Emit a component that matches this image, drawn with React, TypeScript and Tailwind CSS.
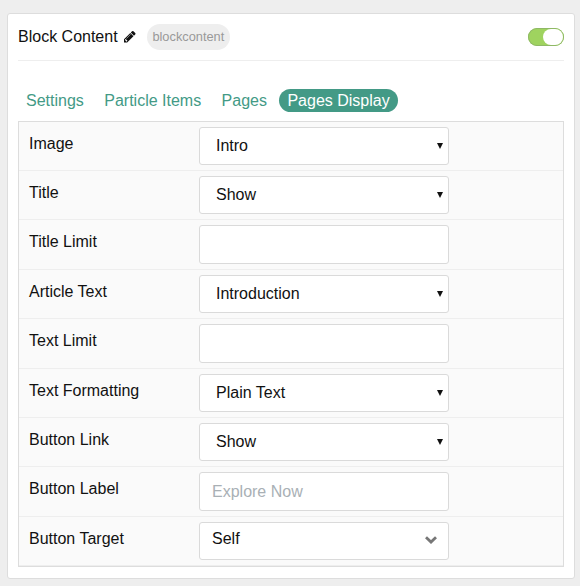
import React from "react";

type Kind = "select" | "input" | "selectize";

interface Field {
  label: string;
  kind: Kind;
  value?: string;
  placeholder?: string;
}

const tabs = ["Settings", "Particle Items", "Pages", "Pages Display"];

const fields: Field[] = [
  { label: "Image", kind: "select", value: "Intro" },
  { label: "Title", kind: "select", value: "Show" },
  { label: "Title Limit", kind: "input" },
  { label: "Article Text", kind: "select", value: "Introduction" },
  { label: "Text Limit", kind: "input" },
  { label: "Text Formatting", kind: "select", value: "Plain Text" },
  { label: "Button Link", kind: "select", value: "Show" },
  { label: "Button Label", kind: "input", placeholder: "Explore Now" },
  { label: "Button Target", kind: "selectize", value: "Self" },
];

function PencilIcon() {
  return (
    <svg viewBox="0 149 1515 1515" className="ml-[6.5px] size-[11.5px]" fill="currentColor">
      <path d="M363 1536l91-91-235-235-91 91v107h128v128h107zM886 608q0-22-22-22-10 0-17 7l-542 542q-7 7-7 17 0 22 22 22 10 0 17-7l542-542q7-7 7-17zM832 416l416 416-832 832h-416v-416zM1515 512q0 53-37 90l-166 166-416-416 166-165q36-38 90-38 53 0 91 38l235 234q37 39 37 91z" />
    </svg>
  );
}

function Control({ field }: { field: Field }) {
  if (field.kind === "input") {
    return (
      <input
        type="text"
        aria-label={field.label}
        placeholder={field.placeholder}
        className="block h-[39px] w-[250px] rounded-[3px] border border-[#dadada] bg-white px-3 text-base text-[#111] placeholder:text-[#a9b0b5]"
      />
    );
  }
  if (field.kind === "selectize") {
    return (
      <div className="flex h-[38px] w-[250px] items-center justify-between rounded-[3px] border border-[#dadada] bg-white pr-[11.5px] pl-3 text-[#111]">
        <span className="pb-1">{field.value}</span>
        <svg width="12" height="8" viewBox="0 0 12 8" className="mb-[2px]">
          <path d="M1 1.2L6 6l5-4.800" fill="none" stroke="#777" strokeWidth="2.800" />
        </svg>
      </div>
    );
  }
  return (
    <div className="flex h-[38px] w-[250px] items-center justify-between rounded-[3px] border border-[#dadada] bg-white pr-[5px] pl-4 text-[#111]">
      <span>{field.value}</span>
      <svg width="6" height="6" viewBox="0 0 6 6" className="mb-px">
        <path d="M0 0h6L3 6z" fill="#111" />
      </svg>
    </div>
  );
}

export default function App() {
  return (
    <div className="h-[586px] w-[580px] bg-[#eeeeee] pt-[13px] pl-[7px] font-['Liberation_Sans',Arial,sans-serif] text-base leading-6 text-[#111]">
      <div className="h-[566px] w-[568px] rounded-[3px] border border-[#dddddd] bg-white px-[10px]">
        <header className="flex h-[47px] items-center border-b border-[#eeeeee]">
          <h4>Block Content</h4>
          <PencilIcon />
          <span className="ml-[11px] flex h-[26px] items-center rounded-full bg-[#eeeeee] px-[5.8px] text-[12.800px] text-[#999]">
            blockcontent
          </span>
          <span className="ml-auto flex h-[18px] w-9 items-center justify-end rounded-full bg-[#9fd35f] pr-px shadow-[inset_0_0_0_1px_#8fb866]">
            <span className="h-4 w-5 rounded-full bg-white" />
          </span>
        </header>
        <nav className="mt-[28px] flex h-[23px] gap-[4.45px]">
          {tabs.map((tab) => (
            <a
              key={tab}
              className={
                tab === "Pages Display"
                  ? "rounded-full bg-[#439a86] px-2 leading-[23px] whitespace-nowrap text-white"
                  : "px-2 leading-[23px] whitespace-nowrap text-[#439a86]"
              }
            >
              {tab}
            </a>
          ))}
        </nav>
        <div className="mt-[9px] border border-[#dddddd] bg-[#fafafa]">
          {fields.map((field) => (
            <div
              key={field.label}
              className="flex border-b border-[#eeeeee] py-[5px] pl-[10px]"
            >
              <label className="w-[170px] pt-[5px]">{field.label}</label>
              <Control field={field} />
            </div>
          ))}
        </div>
      </div>
    </div>
  );
}
